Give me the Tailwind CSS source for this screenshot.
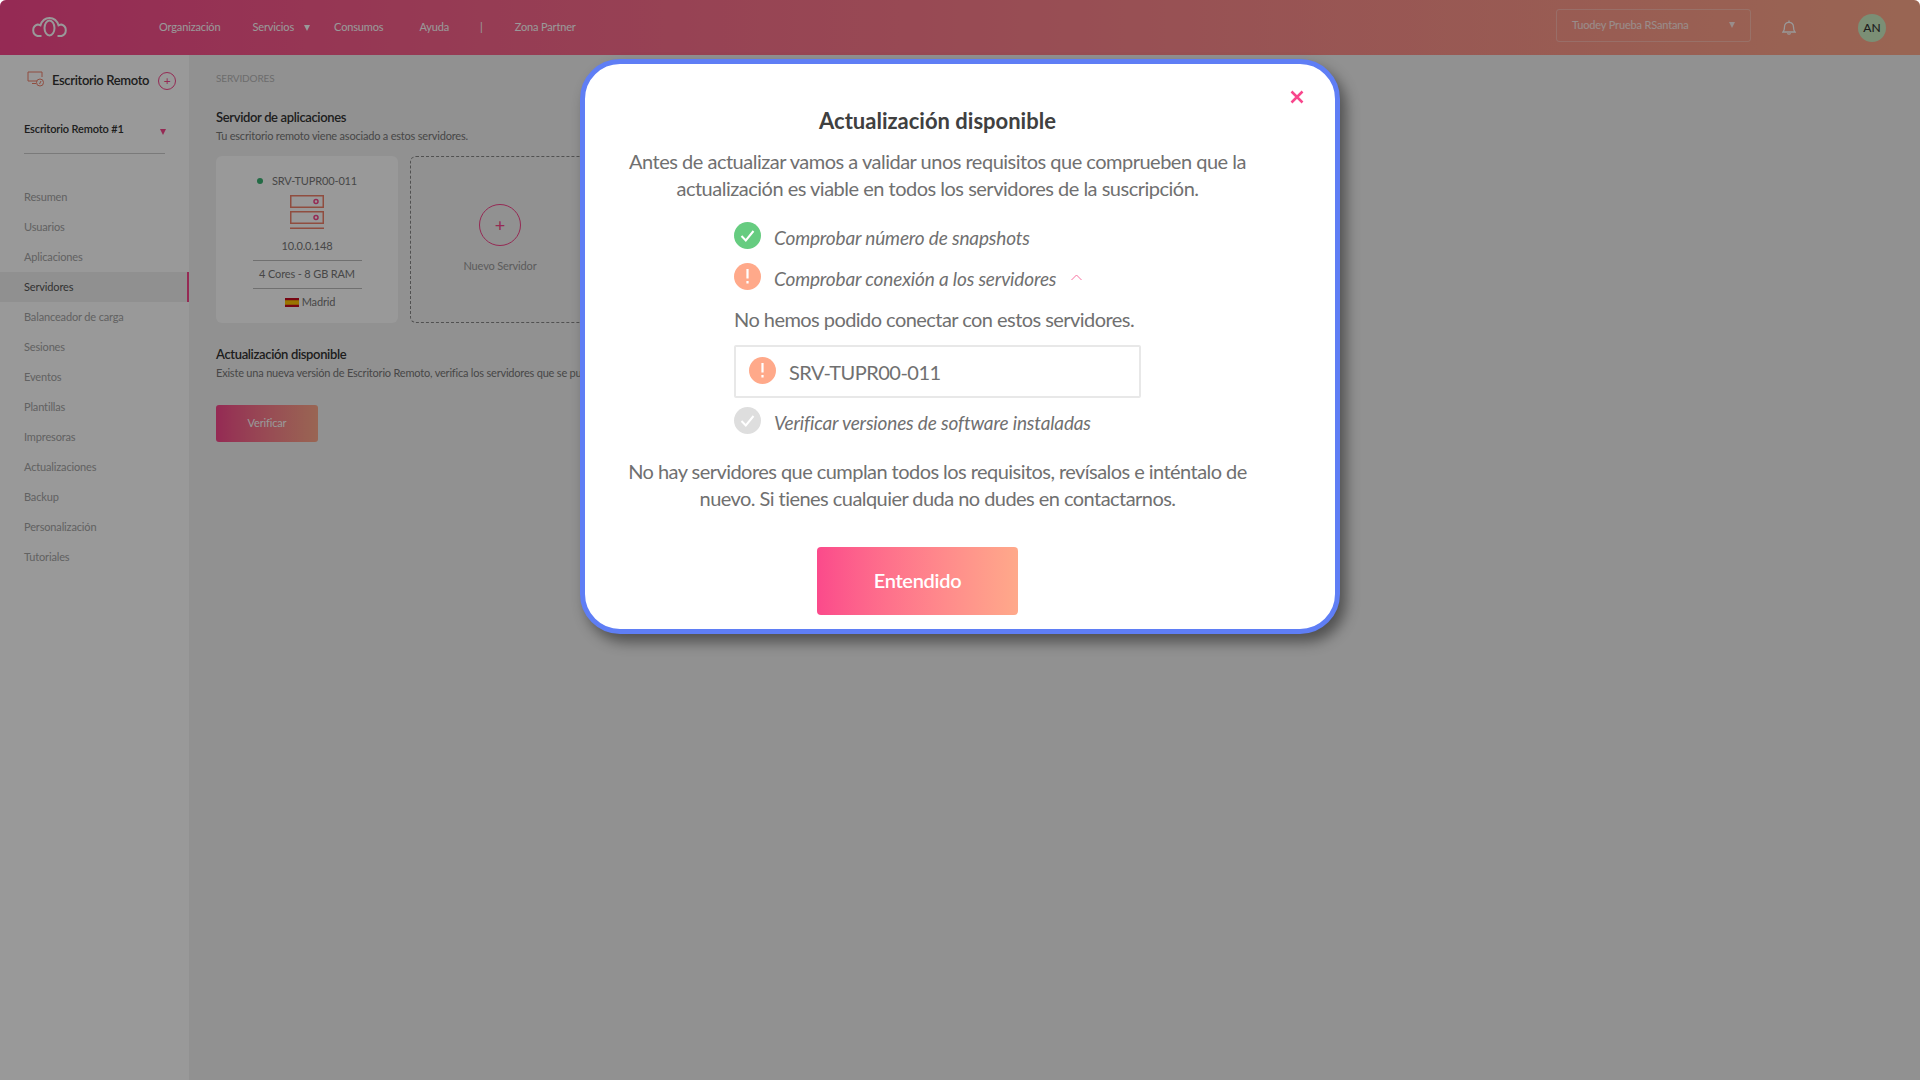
<!DOCTYPE html>
<html lang="es">
<head>
    <meta charset="UTF-8">
    <title>Actualización disponible</title>
    <script src="https://cdn.jsdelivr.net/npm/@tailwindcss/browser@4"></script>
</head>
<body class="bg-white font-[Lato,sans-serif] h-screen overflow-hidden">
    <div class="relative h-[1080px] w-[1920px] overflow-hidden rounded-t-[6px]">

        <!-- Header -->
        <header class="flex h-[55px] items-center bg-gradient-to-r from-[#f8468c] to-[#ffa98a] text-[11px] tracking-[-0.15px] text-white">
            <svg class="mb-[2px] ml-[29px] h-[20px] w-[41px]" viewBox="0 0 38 20" fill="none" stroke="#ffffff" stroke-width="2">
                <path d="M11 19H7A6 6 0 0 1 7 7.5C8 7.5 9 7.7 10 8.3C11.5 3.500 15 1 19 1C23 1 26.500 3.500 28 8.300C29 7.700 30 7.500 31 7.500A6 6 0 0 1 31 19H27"/>
                <ellipse cx="19" cy="11" rx="5" ry="7.500"/>
            </svg>
            <a class="ml-[89px]">Organización</a>
            <a class="ml-[32px]">Servicios</a>
            <svg class="ml-[10px] h-[6px] w-[6px]" viewBox="0 0 6 6"><path d="M0 0H6L3 6Z" fill="#ffffff"/></svg>
            <a class="ml-[24px]">Consumos</a>
            <a class="ml-[36px]">Ayuda</a>
            <span class="ml-[31px]">|</span>
            <a class="ml-[32px]">Zona Partner</a>
            <div class="ml-auto mb-[5px] flex h-[33px] w-[195px] items-center justify-between rounded-[3px] border border-white/30 pl-[15px] pr-[15px] text-white/80">
                <span>Tuodey Prueba RSantana</span>
                <svg class="h-[6px] w-[6px]" viewBox="0 0 6 6"><path d="M0 0H6L3 6Z" fill="#ffffff" fill-opacity=".8"/></svg>
            </div>
            <svg class="ml-[31px] h-[15px] w-[14px]" viewBox="0 0 14 15" fill="none" stroke="#ffffff" stroke-width="1.300">
                <path d="M1 12H13C11.500 10.500 11.500 9 11.500 7C11.500 4 9.500 2.300 7 2.300C4.500 2.300 2.500 4 2.500 7C2.500 9 2.500 10.500 1 12Z"/>
                <path d="M5.500 13.300C6 14.500 8 14.500 8.500 13.300M7 .5V2.300"/>
            </svg>
            <div class="ml-[62px] mr-[34px] flex h-[28px] w-[28px] items-center justify-center rounded-full bg-[#cdeec4] text-[12px] font-medium tracking-normal text-[#333]">AN</div>
        </header>

        <div class="flex h-[1025px]">
            <!-- Sidebar -->
            <aside class="w-[189px] shrink-0 bg-white text-[11px] tracking-[-0.15px] text-[#a3a3a3]">
                <div class="flex h-[50px] items-center pl-[27px] pt-[2px]">
                    <svg class="mb-[4px] h-[16px] w-[17px]" viewBox="0 0 17 16" fill="none" stroke="#f0806a" stroke-width="1">
                        <path d="M10 10H1V1H15V6"/>
                        <path d="M5 12.500H9"/>
                        <circle cx="13" cy="11.500" r="3.500"/>
                        <path d="M12.500 13L14 10"/>
                    </svg>
                    <span class="ml-[8px] text-[13px] font-semibold tracking-[-0.35px] text-[#333]">Escritorio Remoto</span>
                    <span class="ml-[9px] flex h-[18px] w-[18px] items-center justify-center rounded-full border border-[#f8468c] text-[12px] leading-none text-[#f8468c]">+</span>
                </div>
                <div class="mx-[24px] mt-[15px] flex h-[34px] items-start justify-between border-b border-[#ccc] pb-[10px] text-[#333]">
                    <span class="mt-[1px] font-semibold">Escritorio Remoto #1</span>
                    <svg class="mr-[-1px] mt-[9px] h-[6px] w-[6px]" viewBox="0 0 6 6"><path d="M0 0H6L3 6Z" fill="#f8468c"/></svg>
                </div>
                <nav class="mt-[28px] flex flex-col">
                    <a class="flex h-[30px] items-center pl-[24px]">Resumen</a>
                    <a class="flex h-[30px] items-center pl-[24px]">Usuarios</a>
                    <a class="flex h-[30px] items-center pl-[24px]">Aplicaciones</a>
                    <a class="flex h-[30px] items-center border-r-2 border-[#f8468c] bg-[#f0f0f0] pl-[24px] text-[#555]">Servidores</a>
                    <a class="flex h-[30px] items-center pl-[24px]">Balanceador de carga</a>
                    <a class="flex h-[30px] items-center pl-[24px]">Sesiones</a>
                    <a class="flex h-[30px] items-center pl-[24px]">Eventos</a>
                    <a class="flex h-[30px] items-center pl-[24px]">Plantillas</a>
                    <a class="flex h-[30px] items-center pl-[24px]">Impresoras</a>
                    <a class="flex h-[30px] items-center pl-[24px]">Actualizaciones</a>
                    <a class="flex h-[30px] items-center pl-[24px]">Backup</a>
                    <a class="flex h-[30px] items-center pl-[24px]">Personalización</a>
                    <a class="flex h-[30px] items-center pl-[24px]">Tutoriales</a>
                </nav>
            </aside>

            <!-- Main -->
            <main class="flex-1 bg-[#f2f2f2] pl-[27px] text-[11px] tracking-[-0.15px]">
                <div class="mt-[17px] text-[10px] leading-[12px] text-[#b5b5b5]">SERVIDORES</div>
                <h2 class="mt-[25px] text-[13px] font-semibold leading-[16px] tracking-[-0.35px] text-[#333]">Servidor de aplicaciones</h2>
                <p class="mt-[3px] leading-[16px] tracking-[-0.2px] text-[#777]">Tu escritorio remoto viene asociado a estos servidores.</p>
                <div class="mt-[12px] flex gap-[12px]">
                    <div class="flex h-[167px] w-[182px] flex-col items-center rounded-[6px] bg-white pt-[17px] text-[#777]">
                        <div class="flex h-[16px] items-center">
                            <span class="h-[6px] w-[6px] rounded-full bg-[#3bb273]"></span>
                            <span class="ml-[9px]">SRV-TUPR00-011</span>
                        </div>
                        <svg class="mt-[6px] h-[34px] w-[34px]" viewBox="0 0 34 34" fill="none" stroke-width="1.500">
                            <rect x=".75" y=".75" width="32.500" height="11.500" stroke="#f0806a"/>
                            <rect x=".75" y="16.750" width="32.500" height="11.500" stroke="#f0806a"/>
                            <path d="M0 33.250H34" stroke="#f0806a"/>
                            <circle cx="26" cy="6.500" r="2" stroke="#f8468c"/>
                            <circle cx="26" cy="22.500" r="2" stroke="#f8468c"/>
                        </svg>
                        <div class="mt-[9px] leading-[16px]">10.0.0.148</div>
                        <div class="mt-[6px] h-px w-[109px] bg-[#bbb]"></div>
                        <div class="mt-[5px] leading-[16px]">4 Cores - 8 GB RAM</div>
                        <div class="mt-[6px] h-px w-[109px] bg-[#bbb]"></div>
                        <div class="ml-[6px] mt-[5px] flex items-center leading-[16px]">
                            <svg class="mr-[3px] h-[9px] w-[14px]" viewBox="0 0 14 9">
                                <rect width="14" height="9" fill="#c60b1e"/>
                                <rect y="2.250" width="14" height="4.500" fill="#ffc400"/>
                            </svg>
                            Madrid
                        </div>
                    </div>
                    <div class="flex h-[167px] w-[180px] flex-col items-center rounded-[6px] border border-dashed border-[#888] pt-[47px] text-[#999]">
                        <span class="flex h-[42px] w-[42px] items-center justify-center rounded-full border border-[#f8468c] text-[18px] leading-none text-[#f8468c]">+</span>
                        <span class="mt-[12px] leading-[16px]">Nuevo Servidor</span>
                    </div>
                </div>
                <h2 class="mt-[23px] text-[13px] font-semibold leading-[16px] tracking-[-0.35px] text-[#333]">Actualización disponible</h2>
                <p class="mt-[3px] whitespace-nowrap leading-[16px] tracking-[-0.2px] text-[#777]">Existe una nueva versión de Escritorio Remoto, verifica los servidores que se pueden actualizar.</p>
                <button class="mt-[24px] flex h-[37px] w-[102px] items-center justify-center rounded-[3px] bg-gradient-to-r from-[#f8468c] to-[#ffa98a] text-white">Verificar</button>
            </main>
        </div>

        <!-- Dimmed backdrop -->
        <div class="absolute inset-0 bg-black/40"></div>

        <!-- Modal -->
        <div class="absolute left-[580px] top-[59px] w-[760px] rounded-[40px] border-[5px] border-[#5f7ef5] bg-white pb-[14px] shadow-[6px_8px_14px_rgba(0,0,0,0.45)]">
            <button class="absolute right-[31px] top-[26px] text-[#f8468c]">
                <svg class="h-[14px] w-[14px]" viewBox="0 0 14 14" fill="none" stroke="#f8468c" stroke-width="2.500">
                    <path d="M1.500 1.500L12.500 12.500M12.500 1.500L1.500 12.500"/>
                </svg>
            </button>
            <div class="w-[705px]">
                <h1 class="mt-[42px] text-center text-[22px] font-bold leading-[30px] text-[#404040]">Actualización disponible</h1>
                <p class="mt-[12px] text-center text-[20px] leading-[27px] tracking-[-0.5px] text-[#707070]">Antes de actualizar vamos a validar unos requisitos que comprueben que la<br>actualización es viable en todos los servidores de la suscripción.</p>

                <div class="ml-[149px]">
                    <div class="mt-[20px] flex h-[27px] items-center">
                        <svg class="h-[27px] w-[27px] shrink-0" viewBox="0 0 27 27">
                            <circle cx="13.500" cy="13.500" r="13.500" fill="#66cc80"/>
                            <path d="M7.500 14L11.800 18.500L19.500 9" fill="none" stroke="#fff" stroke-width="2"/>
                        </svg>
                        <span class="ml-[13px] mt-[5px] text-[19px] italic tracking-[-0.15px] text-[#707070]">Comprobar número de snapshots</span>
                    </div>
                    <div class="mt-[14px] flex h-[27px] items-center">
                        <svg class="h-[27px] w-[27px] shrink-0" viewBox="0 0 27 27">
                            <circle cx="13.500" cy="13.500" r="13.500" fill="#ffa98a"/>
                            <path d="M13.500 6V15.500M13.500 18V20.500" fill="none" stroke="#fff" stroke-width="2.200"/>
                        </svg>
                        <span class="ml-[13px] mt-[5px] text-[19px] italic tracking-[-0.15px] text-[#707070]">Comprobar conexión a los servidores</span>
                        <svg class="ml-[15px] mt-[2px] h-[7px] w-[11px]" viewBox="0 0 11 7" fill="none" stroke="#f8709f" stroke-width="1">
                            <path d="M.5 6L5.500 1L10.500 6"/>
                        </svg>
                    </div>
                    <p class="mt-[16px] text-[20px] leading-[27px] tracking-[-0.55px] text-[#707070]">No hemos podido conectar con estos servidores.</p>
                    <div class="mt-[12px] flex h-[53px] w-[407px] items-center rounded-[2px] border-2 border-[#e8e8e8] pl-[13px]">
                        <svg class="mb-[3px] h-[27px] w-[27px] shrink-0" viewBox="0 0 27 27">
                            <circle cx="13.500" cy="13.500" r="13.500" fill="#ffa98a"/>
                            <path d="M13.500 6V15.500M13.500 18V20.500" fill="none" stroke="#fff" stroke-width="2.200"/>
                        </svg>
                        <span class="ml-[13px] text-[20px] tracking-[-0.5px] text-[#707070]">SRV-TUPR00-011</span>
                    </div>
                    <div class="mt-[9px] flex h-[27px] items-center">
                        <svg class="h-[27px] w-[27px] shrink-0" viewBox="0 0 27 27">
                            <circle cx="13.500" cy="13.500" r="13.500" fill="#dedede"/>
                            <path d="M7.500 14L11.800 18.500L19.500 9" fill="none" stroke="#fff" stroke-width="2"/>
                        </svg>
                        <span class="ml-[13px] mt-[5px] text-[19px] italic tracking-[-0.15px] text-[#707070]">Verificar versiones de software instaladas</span>
                    </div>
                </div>

                <p class="mt-[24px] text-center text-[20px] leading-[27px] tracking-[-0.55px] text-[#707070]">No hay servidores que cumplan todos los requisitos, revísalos e inténtalo de<br>nuevo. Si tienes cualquier duda no dudes en contactarnos.</p>

                <button class="ml-[232px] mt-[35px] flex h-[68px] w-[201px] items-center justify-center rounded-[4px] bg-gradient-to-r from-[#fb4a8b] to-[#ffa98a] pb-[2px] text-[20px] font-semibold tracking-[-0.3px] text-white">Entendido</button>
            </div>
        </div>
    </div>
</body>
</html>
